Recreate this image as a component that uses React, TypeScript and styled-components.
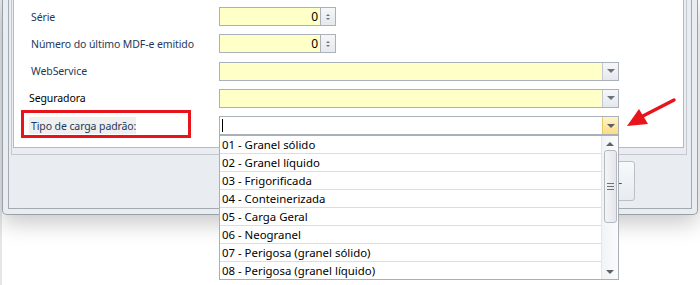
import styled, { createGlobalStyle } from 'styled-components';

const GlobalStyle = createGlobalStyle`
  html, body {
    margin: 0;
    padding: 0;
    background: #fff;
    font-family: "Noto Sans", "Open Sans", sans-serif;
    font-size: 11px;
  }
  #root {
    width: 700px;
    height: 285px;
    overflow: hidden;
    background: linear-gradient(to right, #e4e6ea 0, #e4e6ea 2px, #fff 2px);
  }
`;

const Window = styled.div`
  margin-left: 2px;
  width: 696px;
  height: 215px;
  box-sizing: border-box;
  border: 1px solid #9aa0a8;
  border-top: none;
  border-radius: 0 0 5px 5px;
  background: #e9ecf0;
  padding: 0 5px 5px 5px;
  box-shadow: 0 8px 22px rgba(0, 0, 0, 0.22);
  position: relative;
`;

const Inner = styled.div`
  height: 100%;
  box-sizing: border-box;
  border: 1px solid #a4aab2;
  border-top: none;
  display: flex;
  flex-direction: column;
  padding: 0 4px 0 2px;
`;

const Group = styled.div`
  height: 155px;
  box-sizing: border-box;
  border: 1px solid #c4c9d0;
  border-top: none;
  padding: 0 2px 6px 1px;
`;

const Content = styled.div`
  height: 100%;
  box-sizing: border-box;
  background: #fff;
  border: 1px solid #b4bac2;
  border-top: none;
  padding: 7px 0 0 17px;
  display: flex;
  flex-direction: column;
  gap: 8.3px;
`;

const Row = styled.div`
  display: flex;
  align-items: center;
  height: 19px;
  position: relative;
`;

const LabelCell = styled.div<{ $highlight?: boolean }>`
  width: 188px;
  flex: none;
  position: relative;
  height: 100%;
  display: flex;
  align-items: center;
  ${p => p.$highlight && `
    &::after {
      content: '';
      position: absolute;
      left: -10px;
      top: -6px;
      width: 170px;
      height: 28px;
      box-sizing: border-box;
      border: 3px solid #e8141c;
    }
  `}
`;

const Label = styled.span<{ $dark?: boolean; $shade?: boolean; $shift?: number }>`
  color: ${p => (p.$dark ? '#000' : '#1e395b')};
  margin-left: ${p => p.$shift ?? 0}px;
  font-size: 10.5px;
  letter-spacing: -0.1px;
  white-space: nowrap;
  ${p => p.$shade && `
    background: #efefef;
    padding: 2px 0 1px 2px;
    margin-left: -2px;
  `}
`;

const SpinBox = styled.div`
  display: flex;
  height: 19px;
`;

const SpinInput = styled.div`
  width: 101px;
  height: 100%;
  box-sizing: border-box;
  border: 1px solid #abb1ba;
  border-right: none;
  background: #ffffc8;
  text-align: right;
  padding-right: 2px;
  line-height: 17px;
  color: #000;
  font-size: 12px;
`;

const SpinButtons = styled.div`
  width: 16px;
  height: 100%;
  box-sizing: border-box;
  border: 1px solid #abb1ba;
  background: linear-gradient(#f4f6f8, #e6e9ed);
  display: flex;
  flex-direction: column;
  align-items: center;
  justify-content: center;
  gap: 2px;
`;

const SmallTri = styled.div<{ $up?: boolean; $size?: number; $color?: string }>`
  width: 0;
  height: 0;
  border-left: ${p => p.$size ?? 3}px solid transparent;
  border-right: ${p => p.$size ?? 3}px solid transparent;
  ${p => (p.$up ? 'border-bottom' : 'border-top')}: ${p => p.$size ?? 3}px solid ${p => p.$color ?? '#6d737b'};
`;

const Combo = styled.div<{ $active?: boolean }>`
  width: 400px;
  height: 19px;
  box-sizing: border-box;
  border: 1px solid #abb1ba;
  background: ${p => (p.$active ? '#fff' : '#ffffc8')};
  display: flex;
  position: relative;
`;

const ComboText = styled.div`
  flex: 1;
  position: relative;
`;

const Caret = styled.div`
  position: absolute;
  left: 2px;
  top: 2px;
  width: 1px;
  height: 13px;
  background: #000;
`;

const DropButton = styled.div<{ $hot?: boolean }>`
  width: 16px;
  height: 100%;
  box-sizing: border-box;
  border-left: 1px solid ${p => (p.$hot ? '#e7c76c' : '#c2c8d0')};
  background: ${p => (p.$hot ? 'linear-gradient(#fff5c9, #fbdc84)' : 'linear-gradient(#f6f7f9, #e4e8ed)')};
  display: flex;
  align-items: center;
  justify-content: center;
`;

const DropList = styled.div`
  position: absolute;
  left: -1px;
  top: 18px;
  width: 400px;
  height: 145px;
  box-sizing: border-box;
  border: 1px solid #a9afb8;
  background: #fff;
  display: flex;
  z-index: 5;
`;

const Items = styled.div`
  flex: 1;
  display: flex;
  flex-direction: column;
`;

const Item = styled.div`
  height: 18px;
  box-sizing: border-box;
  border-bottom: 1px solid #dadde1;
  padding-left: 2px;
  line-height: 17px;
  color: #000;
  font-size: 11.4px;
  white-space: nowrap;
  &:last-child {
    border-bottom: none;
  }
`;

const ScrollBar = styled.div`
  width: 17px;
  flex: none;
  border-left: 1px solid #e3e6ea;
  background: linear-gradient(to right, #f2f3f5, #fafbfc);
  display: flex;
  flex-direction: column;
  align-items: center;
  padding: 6px 0 5px;
  box-sizing: border-box;
`;

const Thumb = styled.div`
  margin-top: 4px;
  width: 13px;
  height: 73px;
  box-sizing: border-box;
  border: 1px solid #b5bac2;
  border-radius: 3px;
  background: linear-gradient(to right, #f3f4f6, #e4e6ea);
  display: flex;
  flex-direction: column;
  align-items: center;
  justify-content: center;
  gap: 2px;
`;

const Grip = styled.div`
  width: 7px;
  height: 1px;
  background: #6e737a;
`;

const Spacer = styled.div`
  flex: 1;
`;

const ButtonBar = styled.div`
  flex: 1;
  display: flex;
  justify-content: flex-end;
  align-items: flex-start;
  padding: 6px 52px 0 0;
`;

const Button = styled.div`
  width: 90px;
  height: 40px;
  box-sizing: border-box;
  border: 1px solid #b9c0c8;
  border-radius: 3px;
  background: linear-gradient(#f7f9fb, #e7ebf0);
  display: flex;
  align-items: center;
  justify-content: flex-end;
  padding-right: 12px;
  color: #1e395b;
`;

const Arrow = styled.svg`
  position: absolute;
  left: 0;
  top: 0;
  pointer-events: none;
  z-index: 6;
`;

const cargoTypes = [
  '01 - Granel sólido',
  '02 - Granel líquido',
  '03 - Frigorificada',
  '04 - Conteinerizada',
  '05 - Carga Geral',
  '06 - Neogranel',
  '07 - Perigosa (granel sólido)',
  '08 - Perigosa (granel líquido)',
];

const Spin = ({ value }: { value: number }) => (
  <SpinBox>
    <SpinInput>{value}</SpinInput>
    <SpinButtons>
      <SmallTri $up $size={2} />
      <SmallTri $size={2} />
    </SpinButtons>
  </SpinBox>
);

const App = () => {
  return (
    <>
      <GlobalStyle />
      <Window>
        <Inner>
          <Group>
            <Content>
              <Row>
                <LabelCell><Label>Série</Label></LabelCell>
                <Spin value={0} />
              </Row>
              <Row>
                <LabelCell><Label>Número do último MDF-e emitido</Label></LabelCell>
                <Spin value={0} />
              </Row>
              <Row>
                <LabelCell><Label>WebService</Label></LabelCell>
                <Combo>
                  <ComboText />
                  <DropButton><SmallTri $size={4} /></DropButton>
                </Combo>
              </Row>
              <Row>
                <LabelCell><Label $dark $shift={-2}>Seguradora</Label></LabelCell>
                <Combo>
                  <ComboText />
                  <DropButton><SmallTri $size={4} /></DropButton>
                </Combo>
              </Row>
              <Row>
                <LabelCell $highlight><Label $shade>Tipo de carga padrão:</Label></LabelCell>
                <Combo $active>
                  <ComboText><Caret /></ComboText>
                  <DropButton $hot><SmallTri $size={4} $color="#5b5f66" /></DropButton>
                  <DropList>
                    <Items>
                      {cargoTypes.map(t => <Item key={t}>{t}</Item>)}
                    </Items>
                    <ScrollBar>
                      <SmallTri $up $size={4} $color="#5e636a" />
                      <Thumb>
                        <Grip />
                        <Grip />
                        <Grip />
                      </Thumb>
                      <Spacer />
                      <SmallTri $size={4} $color="#5e636a" />
                    </ScrollBar>
                  </DropList>
                </Combo>
              </Row>
            </Content>
          </Group>
          <ButtonBar>
            <Button>-</Button>
          </ButtonBar>
        </Inner>
        <Arrow width="696" height="215" viewBox="2 0 696 215">
          <line x1="673" y1="100" x2="640" y2="117" stroke="#e8141c" strokeWidth="3.5" strokeLinecap="round" />
          <polygon points="626,126 638,109 647,124" fill="#e8141c" />
        </Arrow>
      </Window>
    </>
  );
};

export default App;
